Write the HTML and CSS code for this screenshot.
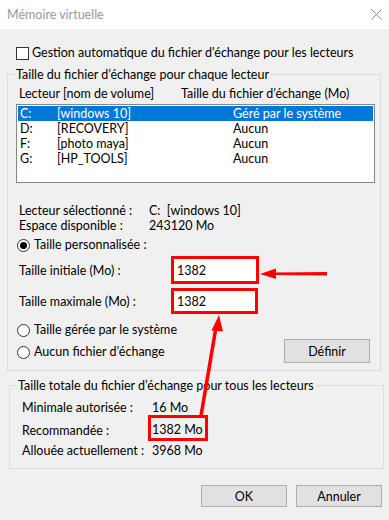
FILE: index.html
```html
<!DOCTYPE html>
<html lang="fr">
<head>
<meta charset="utf-8">
<title>Mémoire virtuelle</title>
<link rel="stylesheet" href="styles.css">
</head>
<body>
<div class="window">
  <div class="titlebar">
    <span class="title">Mémoire virtuelle</span>
    <svg class="close" width="11" height="11" viewBox="0 0 11 11"><path d="M0.5 0.5 L10.5 10.5 M10.5 0.5 L0.5 10.5" stroke="#8a8a8a" stroke-width="1" fill="none"/></svg>
  </div>
  <div class="body">
    <div class="check-row"><span class="checkbox"></span><span>Gestion automatique du fichier d'échange pour les lecteurs</span></div>

    <fieldset class="group group-drives">
      <legend>Taille du fichier d’échange pour chaque lecteur</legend>
      <div class="list-head"><span class="col-drive">Lecteur [nom de volume]</span><span>Taille du fichier d’échange (Mo)</span></div>
      <div class="listbox">
        <div class="row selected"><span class="c1">C:</span><span class="c2">[windows 10]</span><span>Géré par le système</span></div>
        <div class="row"><span class="c1">D:</span><span class="c2">[RECOVERY]</span><span>Aucun</span></div>
        <div class="row"><span class="c1">F:</span><span class="c2">[photo maya]</span><span>Aucun</span></div>
        <div class="row"><span class="c1">G:</span><span class="c2">[HP_TOOLS]</span><span>Aucun</span></div>
      </div>
      <div class="info">
        <div class="info-row"><span class="k">Lecteur sélectionné :</span><span>C:&nbsp; [windows 10]</span></div>
        <div class="info-row"><span class="k">Espace disponible :</span><span>243120 Mo</span></div>
      </div>
      <div class="radio-row first"><span class="radio checked"></span><span>Taille personnalisée :</span></div>
      <div class="field-row f1"><span class="fk">Taille initiale (Mo) :</span><span class="textbox tb1">1382</span></div>
      <div class="field-row f2"><span class="fk">Taille maximale (Mo) :</span><span class="textbox tb2">1382</span></div>
      <div class="bottom-row">
        <div class="radios">
          <div class="radio-row"><span class="radio"></span><span>Taille gérée par le système</span></div>
          <div class="radio-row"><span class="radio"></span><span>Aucun fichier d’échange</span></div>
        </div>
        <button class="btn btn-set">Définir</button>
      </div>
    </fieldset>

    <fieldset class="group group-total">
      <legend>Taille totale du fichier d’échange pour tous les lecteurs</legend>
      <div class="totals">
        <span class="tk r1">Minimale autorisée :</span><span class="tv r1">16 Mo</span>
        <span class="tk r2">Recommandée :</span><span class="tv r2"><span class="mark">1382 Mo</span></span>
        <span class="tk r3">Allouée actuellement :</span><span class="tv r3">3968 Mo</span>
      </div>
    </fieldset>

    <div class="actions">
      <button class="btn">OK</button>
      <button class="btn">Annuler</button>
    </div>
  </div>

  <svg class="annot" width="389" height="520" viewBox="0 0 389 520">
    <polygon points="327,272 327,275.5 274,275 274,272.5" fill="#f00"/>
    <polygon points="260,274 276,268.5 276,279" fill="#f00"/>
    <polygon points="199,417 202.5,417.5 217.5,329 214,328.5" fill="#f00"/>
    <polygon points="219,315 211.5,330.5 223,331.5" fill="#f00"/>
  </svg>
</div>
</body>
</html>
```

FILE: styles.css
```css
* { box-sizing: border-box; }
html, body { margin: 0; padding: 0; }
body {
  width: 389px;
  height: 520px;
  font-family: "Lato", "Liberation Sans", sans-serif;
  font-size: 12.5px;
  color: #000;
  background: #f0f0f0;
}
.window {
  position: relative;
  width: 389px;
  height: 520px;
  overflow: hidden;
}
.titlebar {
  height: 29px;
  background: #fff;
  display: flex;
  align-items: center;
  justify-content: space-between;
  padding: 0 7px 1px 7px;
}
.title { color: #999; }
.body {
  height: 491px;
  background: #f0f0f0;
  display: flex;
  flex-direction: column;
  align-items: flex-start;
}
.check-row {
  margin-top: 16px;
  height: 16px;
  line-height: 16px;
  padding-left: 16px;
  display: flex;
  align-items: center;
  gap: 3px;
}
.checkbox {
  width: 13px;
  height: 13px;
  border: 1px solid #333;
  background: #fff;
}
.group {
  margin: 0;
  padding: 0;
  border: 1px solid #dcdcdc;
  min-width: 0;
}
.group legend {
  margin-left: 6px;
  padding: 0 2px;
  line-height: 15px;
  height: 15px;
}
.group-drives {
  margin-top: 6px;
  margin-left: 7px;
  width: 374px;
  padding-bottom: 7px;
}
.list-head {
  margin-top: 4px;
  line-height: 15px;
  padding-left: 11px;
  display: flex;
}
.col-drive { width: 162px; }
.listbox {
  margin: 3px 5px 0 8px;
  height: 79px;
  border: 1px solid #828790;
  background: #fff;
  padding: 1px;
}
.row {
  height: 15px;
  line-height: 15px;
  padding-left: 2px;
  display: flex;
}
.row.selected { background: #0078d7; color: #fff; }
.c1 { width: 37px; }
.c2 { width: 176px; }
.info { margin-top: 20px; padding-left: 11px; }
.info-row { line-height: 15px; height: 15px; display: flex; }
.k { width: 130px; }
.radio-row {
  height: 16px;
  line-height: 16px;
  padding-left: 9px;
  display: flex;
  align-items: center;
  gap: 4px;
}
.radio-row.first { margin-top: 4px; }
.radio {
  width: 13px;
  height: 13px;
  border: 1px solid #333;
  border-radius: 50%;
  background: #fff;
  display: flex;
  align-items: center;
  justify-content: center;
}
.radio.checked::after {
  content: "";
  width: 7px;
  height: 7px;
  border-radius: 50%;
  background: #000;
}
.field-row {
  display: flex;
  align-items: center;
  padding-left: 11px;
}
.field-row.f1 { margin-top: 3px; }
.field-row.f2 { margin-top: 4px; }
.fk { width: 152px; }
.textbox {
  background: #fff;
  border: 3px solid #f00;
  padding-left: 3px;
  display: flex;
  align-items: center;
}
.tb1 { width: 88px; height: 28px; }
.tb2 { width: 87px; height: 26px; }
.bottom-row {
  display: flex;
  justify-content: space-between;
  align-items: flex-start;
  padding-top: 8px;
  padding-right: 10px;
}
.radios { display: flex; flex-direction: column; gap: 6px; }
.btn {
  font: inherit;
  color: #000;
  background: #e1e1e1;
  border: 1px solid #adadad;
  padding: 0;
  width: 86px;
  height: 22px;
}
.btn-set { margin-top: 17px; height: 24px; }
.group-total {
  margin-top: 7px;
  margin-left: 9px;
  width: 375px;
  padding-bottom: 10px;
}
.totals {
  margin-top: 7px;
  padding-left: 12px;
  display: grid;
  grid-template-columns: 130px auto;
}
.tk, .tv { display: flex; align-items: center; }
.r1 { height: 15px; }
.r2 { height: 26px; }
.r3 { height: 15px; margin-top: 2px; }
.tk.r2 { padding-top: 4px; }
.mark {
  display: inline-flex;
  align-items: center;
  margin-left: -4px;
  height: 26px;
  padding: 2px 2px 0 1px;
  border: 3px solid #f00;
}
.actions {
  margin-top: 16px;
  align-self: stretch;
  display: flex;
  justify-content: flex-end;
  gap: 9px;
  padding-right: 7px;
}
.annot {
  position: absolute;
  left: 0;
  top: 0;
  pointer-events: none;
}
```
